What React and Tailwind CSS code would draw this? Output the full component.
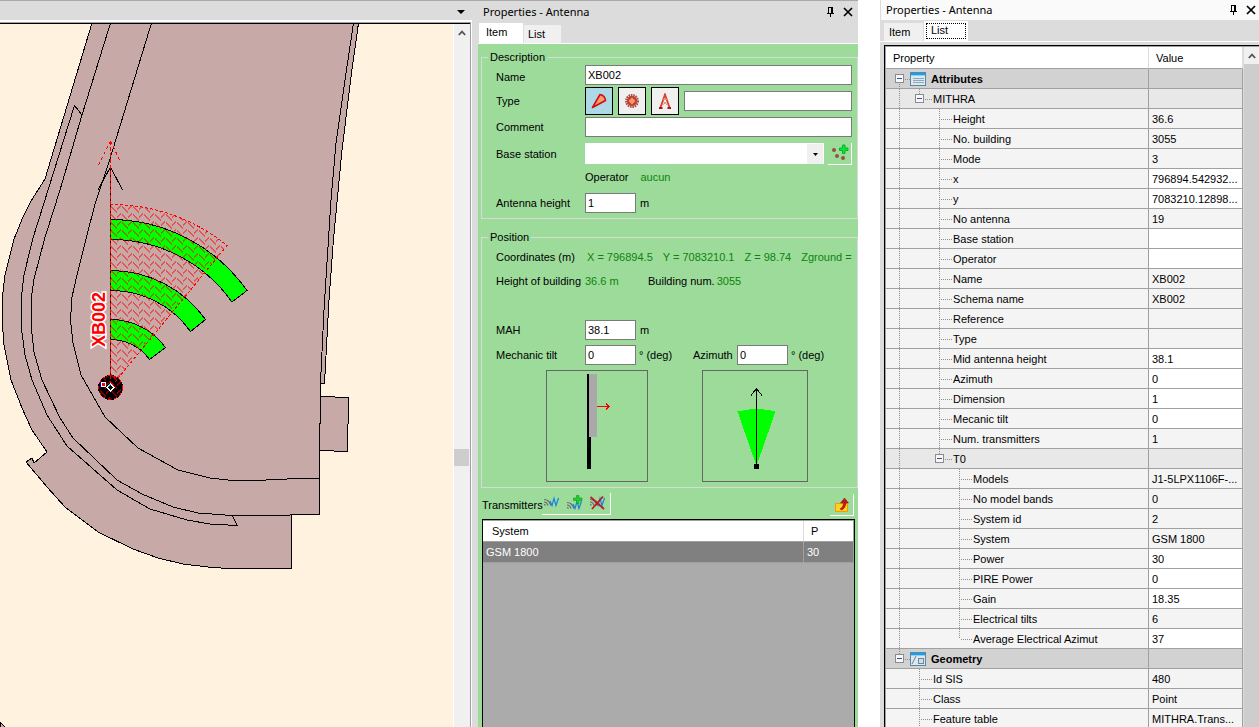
import React, { useState } from 'react';

const attributes = [
    { label: 'Attributes', value: '', kind: 'category', guides: ['boxFirst'], icon: 'list' },
    { label: 'MITHRA', value: '', kind: 'group', guides: ['line', 'boxTop'] },
    { label: 'Height', value: '36.6', guides: ['line', 'blank', 'tee'] },
    { label: 'No. building', value: '3055', guides: ['line', 'blank', 'tee'] },
    { label: 'Mode', value: '3', guides: ['line', 'blank', 'tee'] },
    { label: 'x', value: '796894.542932...', editable: true, guides: ['line', 'blank', 'tee'] },
    { label: 'y', value: '7083210.12898...', editable: true, guides: ['line', 'blank', 'tee'] },
    { label: 'No antenna', value: '19', guides: ['line', 'blank', 'tee'] },
    { label: 'Base station', value: '', editable: true, guides: ['line', 'blank', 'tee'] },
    { label: 'Operator', value: '', editable: true, guides: ['line', 'blank', 'tee'] },
    { label: 'Name', value: 'XB002', guides: ['line', 'blank', 'tee'] },
    { label: 'Schema name', value: 'XB002', guides: ['line', 'blank', 'tee'] },
    { label: 'Reference', value: '', guides: ['line', 'blank', 'tee'] },
    { label: 'Type', value: '', guides: ['line', 'blank', 'tee'] },
    { label: 'Mid antenna height', value: '38.1', editable: true, guides: ['line', 'blank', 'tee'] },
    { label: 'Azimuth', value: '0', editable: true, guides: ['line', 'blank', 'tee'] },
    { label: 'Dimension', value: '1', editable: true, guides: ['line', 'blank', 'tee'] },
    { label: 'Mecanic tilt', value: '0', editable: true, guides: ['line', 'blank', 'tee'] },
    { label: 'Num. transmitters', value: '1', guides: ['line', 'blank', 'tee'] },
    { label: 'T0', value: '', kind: 'group', guides: ['line', 'blank', 'boxTop'] },
    { label: 'Models', value: 'J1-5LPX1106F-...', guides: ['line', 'blank', 'blank', 'tee'] },
    { label: 'No model bands', value: '0', guides: ['line', 'blank', 'blank', 'tee'] },
    { label: 'System id', value: '2', guides: ['line', 'blank', 'blank', 'tee'] },
    { label: 'System', value: 'GSM 1800', guides: ['line', 'blank', 'blank', 'tee'] },
    { label: 'Power', value: '30', editable: true, guides: ['line', 'blank', 'blank', 'tee'] },
    { label: 'PIRE Power', value: '0', editable: true, guides: ['line', 'blank', 'blank', 'tee'] },
    { label: 'Gain', value: '18.35', editable: true, guides: ['line', 'blank', 'blank', 'tee'] },
    { label: 'Electrical tilts', value: '6', guides: ['line', 'blank', 'blank', 'tee'] },
    { label: 'Average Electrical Azimut', value: '37', editable: true, guides: ['line', 'blank', 'blank', 'end'] },
    { label: 'Geometry', value: '', kind: 'category', guides: ['boxTop'], icon: 'shape' },
    { label: 'Id SIS', value: '480', guides: ['blank', 'tee'] },
    { label: 'Class', value: 'Point', guides: ['blank', 'tee'] },
    { label: 'Feature table', value: 'MITHRA.Trans...', guides: ['blank', 'tee'] },
];

const PinIcon = () => (
    <svg width="7" height="10" viewBox="0 0 7 10" shapeRendering="crispEdges">
        <path d="M1 0h5v6h1v1H0V6h1zM2 1v5h2V1z" fillRule="evenodd" />
        <path d="M3 7h1v3H3z" />
    </svg>
);

const CloseIcon = () => (
    <svg width="10" height="10" viewBox="0 0 10 10">
        <path d="M1 1l8 8M9 1l-8 8" stroke="#000" strokeWidth="1.7" />
    </svg>
);

const ChevronUp = () => (
    <svg width="8" height="6" viewBox="0 0 8 6">
        <path d="M.8 5L4 1.6 7.200 5" fill="none" stroke="#555" strokeWidth="1.8" />
    </svg>
);

// Tree connector: vertical dots at x = 10, horizontal dots at y = 10
const Guide = ({ type, last }) => {
    const isBox = type === 'boxTop' || type === 'boxFirst';
    const drawing = (
        <svg width={last ? 24 : 20} height="19" className="block shrink-0" shapeRendering="crispEdges">
            <g stroke="#8f8f8f" strokeDasharray="1 1">
                {(type === 'line' || type === 'tee') && <path d="M10.5 0V19" />}
                {type === 'end' && <path d="M10.5 0V10" />}
                {type === 'boxTop' && <path d="M10.5 0V5" />}
                {type === 'boxFirst' && <path d="M10.5 15V19" />}
                {(type === 'tee' || type === 'end') && <path d="M12 10.500H24" />}
                {isBox && <path d="M16 10.500H24" />}
            </g>
            {isBox && (
                <g>
                    <rect x="6.500" y="5.500" width="8" height="8" rx="1" fill="#f7f7f7" stroke="#8c8c8c" />
                    <path d="M8 9.500h5" stroke="#3a51a0" />
                </g>
            )}
        </svg>
    );
    if (isBox) {
        return <button aria-label="Collapse" className="shrink-0">{drawing}</button>;
    }
    return drawing;
};

const CategoryIcon = ({ name }) => (
    <svg width="16" height="14" viewBox="0 0 16 14" className="-ml-[3px] shrink-0" shapeRendering="crispEdges">
        <rect x=".5" y=".5" width="15" height="13" fill="#dbe8ef" stroke="#5b87a0" />
        <path d="M1 1h14v2H1z" fill="#1c9fe8" />
        <path d="M1 3h14v1H1z" fill="#8fd0f5" />
        {name === 'list' ? (
            <path d="M3 6.500h11M3 8.500h11M3 10.500h11" stroke="#8fa9b8" />
        ) : (
            <g fill="none" stroke="#6b8798">
                <path d="M2 12L6 4" shapeRendering="auto" />
                <rect x="8.500" y="6.500" width="5" height="5" fill="#d5dde2" />
            </g>
        )}
    </svg>
);

const Title = ({ className }) => (
    <div className={className}>
        <h2 className="flex-1 font-['Noto_Sans',sans-serif] text-[11px] leading-4">Properties - Antenna</h2>
        <button aria-label="Auto hide" className="mr-[9px]"><PinIcon /></button>
        <button aria-label="Close"><CloseIcon /></button>
    </div>
);

const MapView = () => (
    <svg className="block h-full w-full" aria-label="Map">
        <defs>
            <pattern id="hatch" width="11" height="8" patternUnits="userSpaceOnUse" x="111" y="205">
                <path d="M0 1.500h1v1h1v1h1v1h1v1h1v1h1v1h-1v-1h-1v-1h-1v-1h-1v-1h-1v-1h-1zM9 .5h1v1h-1v1h-1v1h-1v1h-1v-1h1v-1h1v-1h1z" fill="#f00" />
            </pattern>
        </defs>
        <g transform="translate(0 -24)" shapeRendering="crispEdges" fill="none" stroke="#000">
            <path
                fill="#c7aaa7"
                d="M92 23L45 179L31 201L23 217L14 239L5 275L2 300V318L4 345L11 380L22 408L32 430L47 452L34 463L32 458L26 462L47 487L65 507L98 532L133 549L158 558L183 564L208 567L227 568.500H291.500V514.500H319.500V450.500L347.500 451.500L348.500 397.500L320.500 396.500V383.500H324.500L329 300L333.500 239L342 150L351.500 73L358.500 23Z"
            />
            <path d="M353.500 23L346 73L336 143L331 200L328.500 239L324 310L320.500 383" />
            <path d="M320.500 383V423L319.500 424V515" />
            <path d="M110.500 23L82 115L60 190L44.500 239L34 279L31 300V325L34 352L42 380L60 418L73 438L117 480L142 494L173 507L198 513L232 515.500H261L319.500 514.500" />
            <path d="M82 115L74.500 105.500L32.700 239L24 275L21 300V325L25 355L32 380L47 415L67 446L117 490L150 509L187 520L210 524L237.500 525.500L232 515.500" />
            <path d="M151.500 23L109 162L95 204L86 239L76.500 277L72 297L70.500 320L73 343L81 375L105 417L138 448L178 470L210 478L233 480.500H255L298 478.500H319.500" />
            <path d="M0 722L6 728H0z" fill="#c7aaa7" />

            <g fill="#0f0">
                <path d="M110.500 219.500A168 168 0 0 1 247 290.500L232 302A148 148 0 0 0 110.500 239.500Z" />
                <path d="M110.500 270.500A117 117 0 0 1 205.500 319.500L190.500 331.500A97 97 0 0 0 110.500 290.500Z" />
                <path d="M110.500 319.500A68 68 0 0 1 165.500 347.500L149.500 359.500A48 48 0 0 0 110.500 339.500Z" />
            </g>
            <circle cx="110.500" cy="387.500" r="12" fill="#000" />
            <path d="M110.500 204.500A183 183 0 0 1 227 245.500L110.500 387.500Z" fill="url(#hatch)" stroke="#f00" strokeDasharray="3 2" />
            <circle cx="110.500" cy="387.500" r="12" fill="url(#hatch)" stroke="#f00" strokeDasharray="3 3" />

            <path d="M110.500 387V167M98 190L110.500 167L122.500 190" />
            <path d="M110.500 141V387" stroke="#f00" strokeDasharray="4 2" />
            <path d="M110.500 141L98 166M110.500 141L121 163" stroke="#f00" strokeDasharray="3 3" />

            <rect x="101.500" y="382.500" width="4" height="4" fill="#f00" stroke="#fff" />
            <path d="M100.500 382V387" stroke="#00f" />
            <path d="M107 387.500L110.500 384L114 387.500L110.500 391Z" stroke="#fff" />
            <path d="M110.500 384L108 387" stroke="#0ff" />
        </g>
        <text
            transform="translate(105 323) rotate(-90)"
            className="font-['Liberation_Sans',sans-serif] text-[18px] font-bold"
            fill="#f00"
            stroke="#fff"
            strokeWidth="3"
            paintOrder="stroke"
        >
            XB002
        </text>
    </svg>
);

const SectorIcon = () => (
    <svg width="16" height="16" viewBox="0 0 16 16">
        <path d="M1.500 14.500L9 1.500q5 1 5.500 6z" fill="#ff9b6b" stroke="#d01010" strokeWidth="1.6" strokeLinejoin="round" />
    </svg>
);

const OmniIcon = () => (
    <svg width="16" height="16" viewBox="0 0 16 16">
        <circle cx="8" cy="8" r="5.500" fill="none" stroke="#b05048" strokeWidth="3" strokeDasharray="1.500 0.700" />
        <circle cx="8" cy="8" r="5" fill="#b84038" />
        <path d="M8 4.500L11.500 8L8 11.500L4.500 8z" fill="#ff9a5a" />
    </svg>
);

const PylonIcon = () => (
    <svg width="16" height="16" viewBox="0 0 16 16" fill="none">
        <path d="M3.500 14.500L8 1.500L12.500 14.500" stroke="#d8402a" strokeWidth="1.800" />
        <path d="M6 8.500L10.500 12M10 8.500L5.500 12M6 6.500h4" stroke="#e8907a" />
        <path d="M2 15h3.500M10.500 15H14" stroke="#a81818" strokeWidth="2" />
    </svg>
);

const StationIcon = () => (
    <svg width="18" height="18" viewBox="0 0 18 18">
        <g fill="#8d5440">
            <circle cx="3" cy="7" r="2" />
            <circle cx="6" cy="13" r="2" />
            <circle cx="12" cy="15" r="2" />
        </g>
        <path d="M11.500 2h2.500v3h3v2.500h-3v3h-2.500v-3h-3V5h3z" fill="#0e3" stroke="#0a9c1c" strokeWidth=".8" />
    </svg>
);

const WaveIcon = ({ mark }) => (
    <svg width="17" height="17" viewBox="0 0 17 17" fill="none">
        <g transform={mark === 'add' ? 'translate(0 3)' : undefined}>
            <path d="M1 4.500q5 0 7 6M1 7q3 0 4 3.500M1 9.500q1 0 1.500 1" stroke="#666" strokeWidth="1.200" />
            <path d="M7 6l2 4.500L11 3.500l2 7L15.500 3" stroke="#1583e0" strokeWidth="1.200" />
        </g>
        {mark === 'add' && <path d="M10.500 .5h2.500v2.500h3v2.500h-3v3h-2.500v-3h-3V3h3z" fill="#2c3" stroke="#0a9c1c" strokeWidth=".6" />}
        {mark === 'remove' && <path d="M1.500 2L15 14M14 1.500L3 14" stroke="#c0182c" strokeWidth="1.800" />}
    </svg>
);

const ExportIcon = () => (
    <svg width="16" height="16" viewBox="0 0 16 16">
        <path d="M1.500 6.500h12v8h-12z" fill="#ffd21c" stroke="#f09a10" />
        <path d="M6 12q3.500-2 3.500-6H6.500L10.500 1l4 5h-2.500q-.5 5-4 7z" fill="#c01818" stroke="#8c1010" strokeWidth=".5" />
    </svg>
);

const TextBox = ({ id, value, className, label }) => (
    <input
        id={id}
        type="text"
        aria-label={label}
        defaultValue={value}
        className={`h-5 border border-[#7a7a7a] bg-white px-[2px] outline-none ${className}`}
    />
);

const ItemPanel = () => {
    const [type, setType] = useState('sector');
    const types = [
        { id: 'sector', icon: <SectorIcon /> },
        { id: 'omni', icon: <OmniIcon /> },
        { id: 'pylon', icon: <PylonIcon /> },
    ];

    return (
        <section className="flex w-[386px] shrink-0 flex-col border-t border-[#a9a9a9] bg-[#dcdcdc] pl-[6px]">
            <Title className="flex h-[22px] shrink-0 items-center pl-[5px] pr-[5px]" />
            <div role="tablist" className="flex h-[21px] shrink-0 items-end border-b border-white">
                <button role="tab" aria-selected="true" className="ml-px h-full w-[44px] bg-white pb-[2px] pl-[7px] text-left">Item</button>
                <button role="tab" aria-selected="false" className="ml-px h-[18px] w-[37px] bg-[#f0f0f0] pl-1 text-left">List</button>
            </div>

            <div className="flex min-h-0 flex-1 flex-col bg-[#9ddb9b] pl-[3px] pt-[5px]">
                <fieldset className="min-w-0 shrink-0 border border-[#d5dcd5] pb-[5px] pl-[14px] pr-[5px]">
                    <legend className="-ml-2 px-[2px] leading-4">Description</legend>
                    <div className="grid grid-cols-[89px_1fr] items-center">
                        <label htmlFor="name" className="self-end">Name</label>
                        <TextBox id="name" value="XB002" className="w-full" />

                        <label htmlFor="type">Type</label>
                        <div className="my-[2px] flex items-center gap-[5px]">
                            {types.map(t => (
                                <button
                                    key={t.id}
                                    aria-label={t.id}
                                    onClick={() => setType(t.id)}
                                    className={`flex h-7 w-7 shrink-0 items-center justify-center border border-black ${type === t.id ? 'bg-[#add8e6]' : 'bg-[#f0f0f0]'}`}
                                >
                                    {t.icon}
                                </button>
                            ))}
                            <TextBox id="type" value="" className="w-full min-w-0" />
                        </div>

                        <label htmlFor="comment">Comment</label>
                        <TextBox id="comment" value="" className="w-full" />

                        <label htmlFor="station" className="mt-[6px]">Base station</label>
                        <div className="mt-[6px] flex gap-1">
                            <div className="relative flex-1">
                                <select id="station" className="h-[21px] w-full appearance-none bg-white px-1 outline-none">
                                    <option></option>
                                </select>
                                <span className="pointer-events-none absolute bottom-px right-px top-px flex w-4 items-center justify-center bg-[#f0f0f0]">
                                    <svg width="5" height="3" viewBox="0 0 5 3"><path d="M0 0h5L2.500 3z" /></svg>
                                </span>
                            </div>
                            <button aria-label="Add base station" className="flex h-[22px] w-6 justify-center border-b border-r border-white"><StationIcon /></button>
                        </div>

                        <span></span>
                        <p className="mb-1 flex h-6 items-center gap-3">
                            <span>Operator</span>
                            <span className="text-[#0a850a]">aucun</span>
                        </p>

                        <label htmlFor="height">Antenna height</label>
                        <div className="flex items-center gap-1">
                            <TextBox id="height" value="1" className="w-[51px]" />
                            <span>m</span>
                        </div>
                    </div>
                </fieldset>

                <fieldset className="mt-[10px] min-w-0 shrink-0 border border-[#d5dcd5] pb-[5px] pl-[14px] pr-[5px]">
                    <legend className="-ml-2 px-[2px] leading-4">Position</legend>
                    <div className="grid grid-cols-[89px_1fr] items-center">
                        <span className="leading-6">Coordinates (m)</span>
                        <p className="flex gap-[10px] overflow-hidden whitespace-nowrap pl-[2px] text-[#0a850a]">
                            <span>X = 796894.5</span>
                            <span>Y = 7083210.1</span>
                            <span>Z = 98.74</span>
                            <span>Zground =</span>
                        </p>

                        <span className="whitespace-nowrap leading-6">Height of building</span>
                        <p className="flex whitespace-nowrap">
                            <span className="w-[63px] text-[#0a850a]">36.6 m</span>
                            <span className="pr-[2px]">Building num.</span>
                            <span className="text-[#0a850a]">3055</span>
                        </p>

                        <label htmlFor="mah" className="mt-[27px]">MAH</label>
                        <div className="mt-[27px] flex items-center gap-1">
                            <TextBox id="mah" value="38.1" className="w-[51px]" />
                            <span>m</span>
                        </div>

                        <label htmlFor="tilt" className="mt-[5px]">Mechanic tilt</label>
                        <div className="mt-[5px] flex items-center">
                            <TextBox id="tilt" value="0" className="w-[51px]" />
                            <span className="w-[57px] pl-[3px]">° (deg)</span>
                            <label htmlFor="azimuth" className="w-[44px]">Azimuth</label>
                            <TextBox id="azimuth" value="0" className="w-[51px]" />
                            <span className="pl-[3px]">° (deg)</span>
                        </div>
                    </div>

                    <div className="mt-[5px] flex gap-[54px] pl-[50px]">
                        <div className="border border-[#666]">
                            <svg width="100" height="110" viewBox="1 1 100 110" className="block" shapeRendering="crispEdges">
                                <path d="M41 4h4v95h-4z" />
                                <path d="M43 4h8v63h-8z" fill="#a9a9a9" />
                                <path d="M51 36.500h13M60 33.500l3 3l-3 3" stroke="#f00" fill="none" />
                            </svg>
                        </div>
                        <div className="border border-[#666]">
                            <svg width="104" height="110" viewBox="1 1 104 110" className="block" shapeRendering="crispEdges">
                                <path d="M54.500 96L35.500 41.500Q54.500 36.500 73.500 41.500z" fill="#0f0" />
                                <path d="M54.500 96V18.500M49 25.500L54.500 18.500L60 25.500" stroke="#000" fill="none" />
                                <path d="M52 94h5v5h-5z" />
                            </svg>
                        </div>
                    </div>
                </fieldset>

                <div className="flex h-[31px] shrink-0 items-center pl-px pr-[4px]">
                    <span className="w-[60px] pt-[3px]">Transmitters</span>
                    <div className="flex h-[22px] items-center gap-[6px] border-b border-r border-white pl-px pr-1">
                        <button aria-label="Transmitter"><WaveIcon /></button>
                        <button aria-label="Add transmitter"><WaveIcon mark="add" /></button>
                        <button aria-label="Remove transmitter"><WaveIcon mark="remove" /></button>
                    </div>
                    <button aria-label="Export" className="ml-auto mt-[3px] flex h-[22px] w-6 items-center justify-center border-b border-r border-white"><ExportIcon /></button>
                </div>

                <div className="mr-[3px] min-h-0 flex-1 border border-b-0 border-black bg-[#ababab] ml-px">
                    <table className="w-full table-fixed border-separate border-spacing-0 border-t border-[#a0a0a0] text-left">
                        <colgroup>
                            <col />
                            <col className="w-[50px]" />
                        </colgroup>
                        <thead>
                            <tr className="bg-white">
                                <th className="h-[21px] border-b border-r border-[#a0a0a0] border-r-[#dcdcdc] py-0 pl-[9px] font-normal">System</th>
                                <th className="h-[21px] border-b border-r border-[#a0a0a0] py-0 pl-[7px] font-normal">P</th>
                            </tr>
                        </thead>
                        <tbody>
                            <tr className="bg-[#808080] text-white">
                                <td className="h-[21px] border-b border-r border-[#a0a0a0] py-0 pl-[3px]">GSM 1800</td>
                                <td className="h-[21px] border-b border-r border-[#a0a0a0] py-0 pl-[3px]">30</td>
                            </tr>
                        </tbody>
                    </table>
                </div>
            </div>
        </section>
    );
};

const rowColor = (row) => {
    if (row.kind === 'category') return 'bg-[#d2d2d2]';
    if (row.kind === 'group') return 'bg-[#e8e8e8]';
    return 'bg-[#f4f4f4]';
};

const ListPanel = () => (
    <section className="flex w-[379px] shrink-0 flex-col bg-[#dcdcdc]">
        <Title className="ml-px flex h-5 shrink-0 items-center bg-[#fafafa] pl-[5px] pr-[3px]" />
        <div role="tablist" className="flex h-[22px] shrink-0 items-end border-b border-white pl-1">
            <button role="tab" aria-selected="false" className="h-[18px] w-[39px] bg-[#f0f0f0] pl-[5px] text-left">Item</button>
            <button role="tab" aria-selected="true" className="ml-px h-5 w-[44px] bg-white p-[2px] text-left">
                <span className="block h-full border border-dotted border-black pl-1 leading-3">List</span>
            </button>
        </div>
        <div className="ml-1 mt-[3px] flex min-h-0 flex-1 border-l border-t border-black">
            <div className="flex min-h-0 flex-1 border-l border-t border-[#a0a0a0]">
                <div className="min-w-0 flex-1 overflow-hidden">
                    <table className="w-full table-fixed border-separate border-spacing-0 whitespace-nowrap text-left">
                        <colgroup>
                            <col />
                            <col className="w-[94px]" />
                        </colgroup>
                        <thead>
                            <tr className="bg-white">
                                <th className="h-[22px] border-b border-r border-[#a0a0a0] border-r-[#dcdcdc] py-0 pl-[7px] font-normal">Property</th>
                                <th className="h-[22px] border-b border-r border-[#a0a0a0] border-r-[#dcdcdc] py-0 pl-[7px] font-normal">Value</th>
                            </tr>
                        </thead>
                        <tbody>
                            {attributes.map((row, i) => (
                                <tr key={i} className={rowColor(row)}>
                                    <td className="h-5 border-b border-r border-[#a0a0a0] py-0 pl-[3px]">
                                        <div className="flex h-[19px] items-center">
                                            {row.guides.map((g, n) => (
                                                <Guide key={n} type={g} last={n === row.guides.length - 1} />
                                            ))}
                                            {row.icon && <CategoryIcon name={row.icon} />}
                                            <span className={row.icon ? 'pl-[5px] font-bold' : ''}>{row.label}</span>
                                        </div>
                                    </td>
                                    <td className={`h-5 border-b border-r border-[#a0a0a0] py-0 pl-[3px] ${row.editable ? 'bg-white' : ''}`}>{row.value}</td>
                                </tr>
                            ))}
                        </tbody>
                    </table>
                </div>
                <div className="ml-px flex w-[15px] flex-col bg-[#cdcdcd]">
                    <button aria-label="Scroll up" className="flex h-[17px] items-center justify-center bg-[#f0f0f0]"><ChevronUp /></button>
                </div>
            </div>
        </div>
    </section>
);

const App = () => (
    <div className="flex h-screen overflow-hidden bg-white font-['Liberation_Sans',sans-serif] text-[11px] leading-4 text-black">
        <main className="flex min-w-0 flex-1 flex-col border-t border-[#a9a9a9] bg-[#dcdcdc]">
            <div className="flex h-[19px] shrink-0 items-center justify-end pr-[7px] pt-[3px]">
                <button aria-label="Open documents">
                    <svg width="8" height="4" viewBox="0 0 8 4"><path d="M0 0h8L4 4z" /></svg>
                </button>
            </div>
            <div className="flex min-h-0 flex-1 border-r border-t-2 border-white">
                <div className="flex min-w-0 flex-1 border-r border-t border-[#a0a0a0]">
                    <div className="flex min-w-0 flex-1 border-t border-black">
                        <div className="min-w-0 flex-1 bg-[#fff2de]"><MapView /></div>
                        <div className="flex w-[17px] flex-col border-l border-white bg-[#f0f0f0]">
                            <button aria-label="Scroll up" className="flex h-[17px] items-center justify-center"><ChevronUp /></button>
                            <div className="mr-px mt-[408px] h-[17px] bg-[#cdcdcd]"></div>
                        </div>
                    </div>
                </div>
            </div>
        </main>
        <ItemPanel />
        <div className="w-[22px] shrink-0"></div>
        <ListPanel />
    </div>
);

export default App;
